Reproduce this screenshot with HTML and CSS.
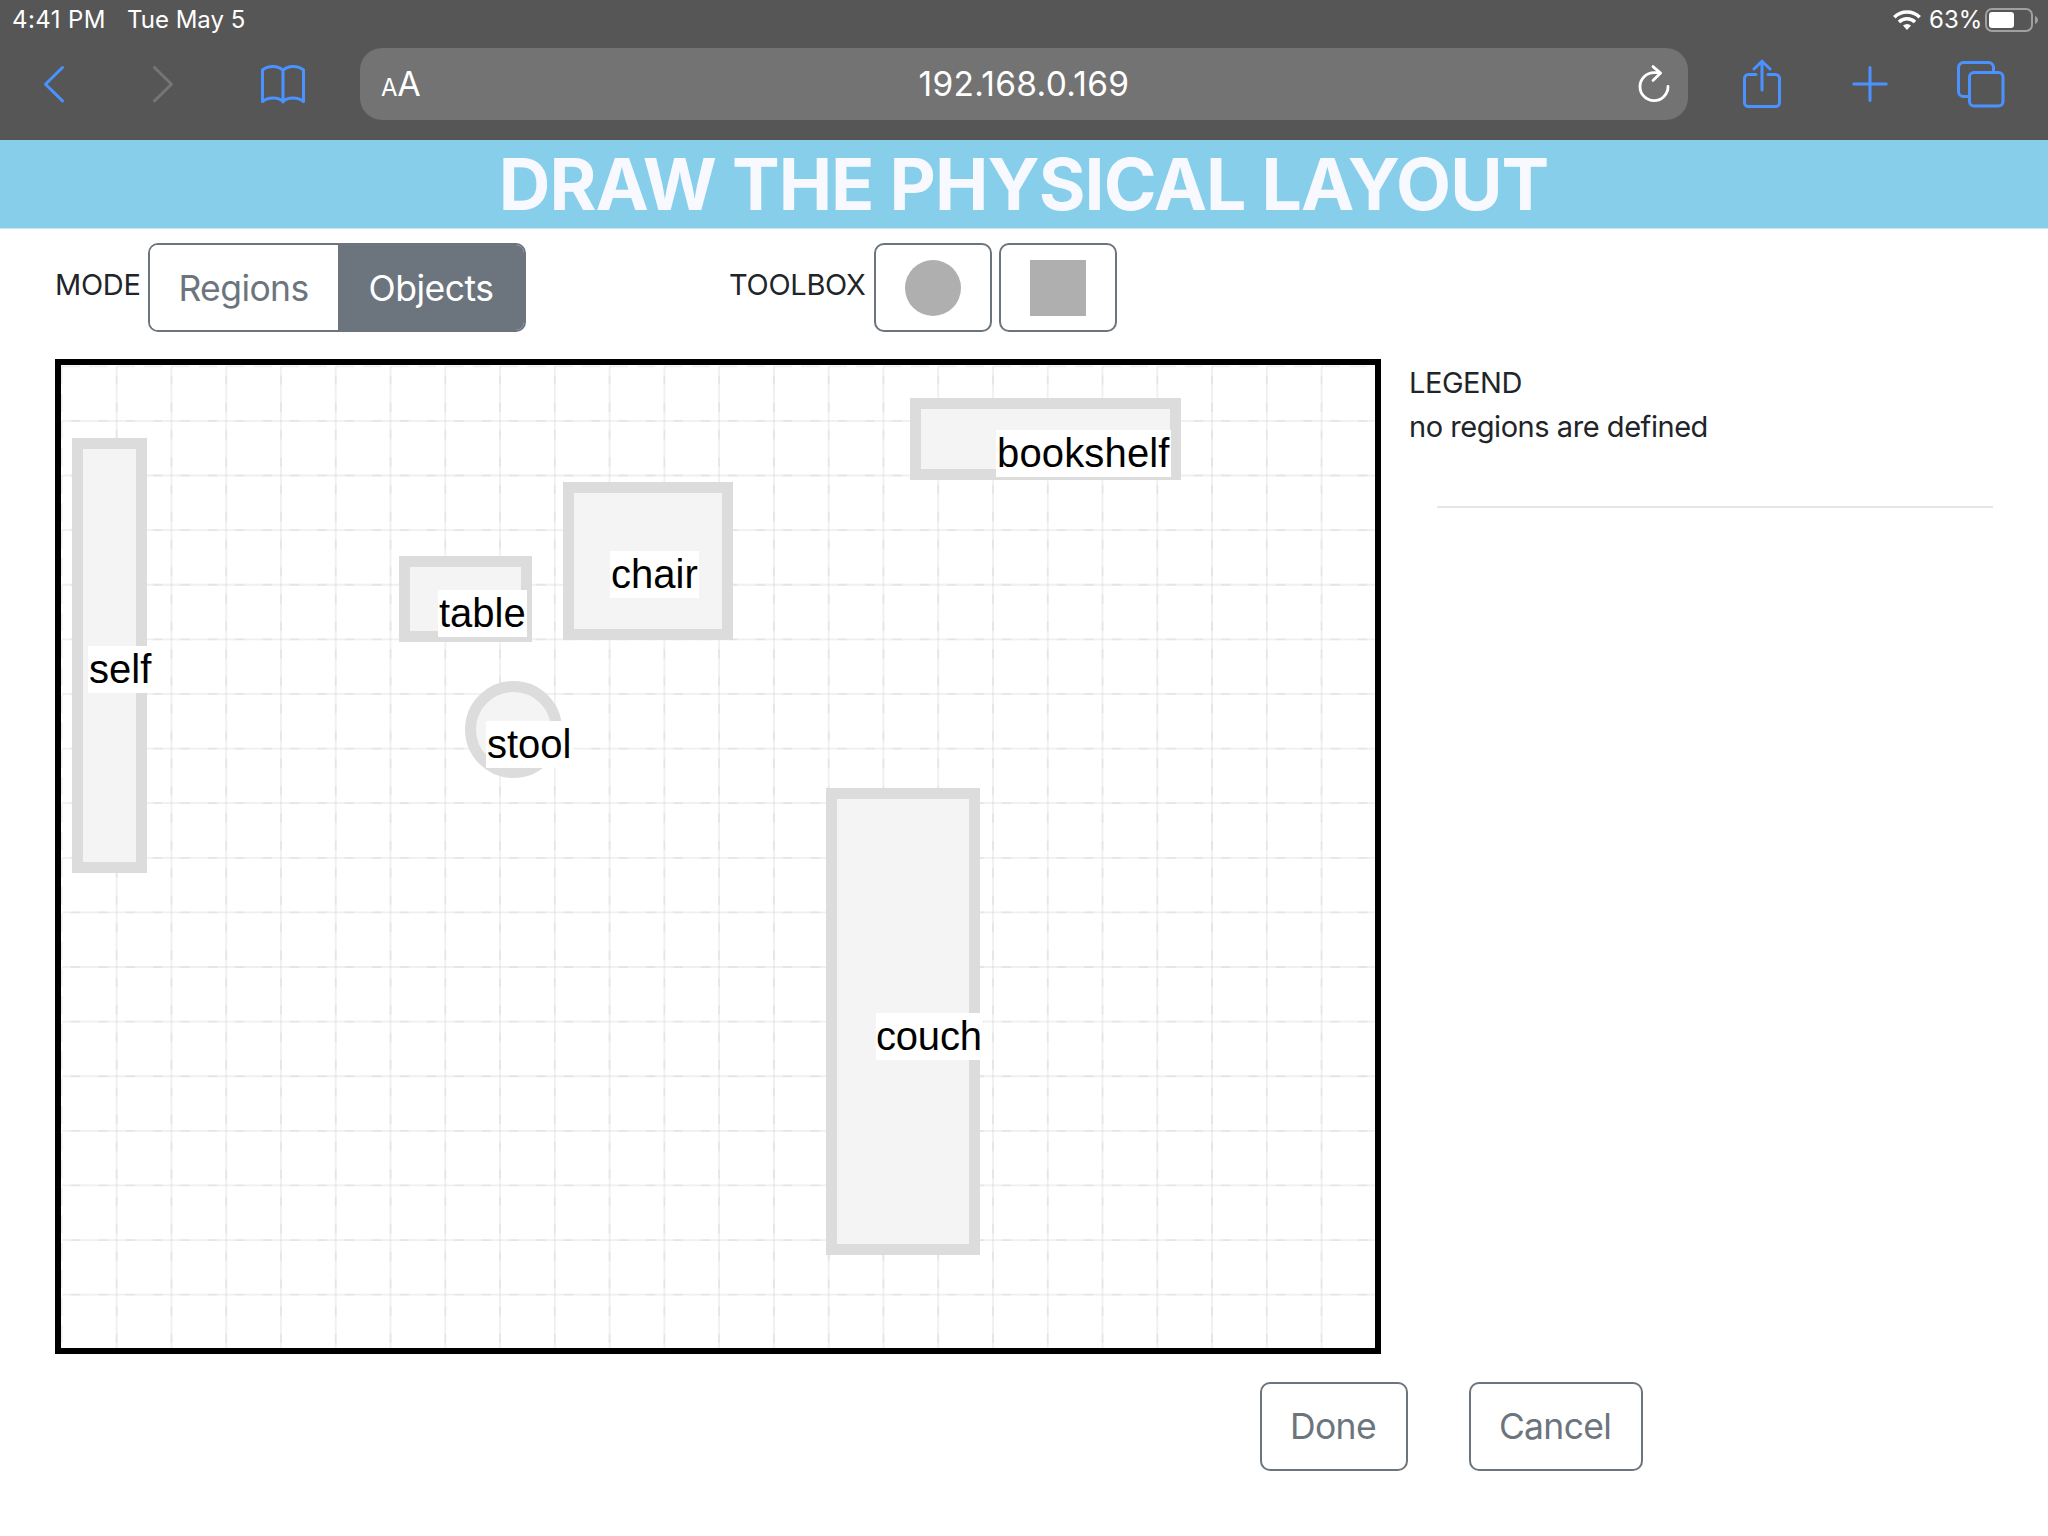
FILE: index.html
```html
<!DOCTYPE html>
<html lang="en">
<head>
<meta charset="utf-8">
<title>Draw the physical layout</title>
<link rel="stylesheet" href="styles.css">
</head>
<body>
<header class="chrome">
  <div class="status">
    <span class="clock">4:41 PM</span>
    <span class="date">Tue May 5</span>
    <svg class="wifi" width="28" height="20" viewBox="0 0 28 20" fill="none" stroke="#fff" stroke-width="3.6">
      <path d="M1.3 7.2a18.2 18.2 0 0 1 25.4 0"/>
      <path d="M6 12a11.6 11.6 0 0 1 16 0"/>
      <path d="M10 15.600a6 6 0 0 1 8 0L14 20z" fill="#fff" stroke="none"/>
    </svg>
    <span class="percent">63%</span>
    <svg class="battery" width="54" height="24" viewBox="0 0 54 24">
      <rect x="1" y="1" width="46" height="22" rx="6" fill="none" stroke="#a0a0a0" stroke-width="2"/>
      <rect x="4" y="4" width="25" height="16" rx="3" fill="#fff"/>
      <path d="M50 8c4 1.500 4 6.500 0 8z" fill="#a0a0a0"/>
    </svg>
  </div>
  <nav class="toolbar">
    <svg class="icon back" width="24" height="40" viewBox="0 0 24 40"><path d="M19.500 3.500 2.500 20.200l17 16.700"/></svg>
    <svg class="icon forward" width="24" height="40" viewBox="0 0 24 40"><path d="M3.500 3.500 20.500 20.200 3.500 36.900"/></svg>
    <svg class="icon book" width="46" height="40" viewBox="0 0 46 40"><path d="M23 38V6.500C18.500 1.200 8 1.200 2.500 6v31.500C8 32.700 18.500 32.700 23 37.500c4.500-4.800 15-4.800 20.500 0V6C38 1.200 27.500 1.200 23 6.500"/></svg>
    <div class="address">
      <span class="reader"><span class="reader-small">A</span>A</span>
      <span class="url">192.168.0.169</span>
      <svg class="reload" width="34" height="40" viewBox="0 0 34 40"><path d="M31 22.500A14 14 0 1 1 17 8.600h6M16 2.600l7.600 6.500-7.600 7.300"/></svg>
    </div>
    <svg class="icon share" width="40" height="50" viewBox="0 0 40 50"><path d="M14 15.500H6.500a4 4 0 0 0-4 4v24a4 4 0 0 0 4 4h27a4 4 0 0 0 4-4v-24a4 4 0 0 0-4-4H26M20 31V2.500M12 10l8-7.800L28 10"/></svg>
    <svg class="icon plus" width="36" height="38" viewBox="0 0 36 38"><path d="M18 2.500v33M1.800 19h32.400"/></svg>
    <svg class="icon tabs" width="50" height="50" viewBox="0 0 50 50"><rect x="13.500" y="13.500" width="33.500" height="33.500" rx="4.500"/><path d="M13 37.500H7.500a5 5 0 0 1-5-5v-24a5 5 0 0 1 5-5h25a5 5 0 0 1 5 5v5"/></svg>
  </nav>
</header>
<h1 class="banner"><span class="banner-text">DRAW THE PHYSICAL LAYOUT</span></h1>
<section class="controls">
  <span class="label mode-label">MODE</span>
  <div class="group">
    <button class="seg seg-off">Regions</button>
    <button class="seg seg-on">Objects</button>
  </div>
  <span class="label tool-label">TOOLBOX</span>
  <button class="tool"><span class="shape round"></span></button>
  <button class="tool"><span class="shape"></span></button>
</section>
<main class="work">
  <div class="canvas">
    <svg class="grid" width="1315" height="983" viewBox="0 0 1315 983">
      <g fill="none" stroke="#c4c4c4" stroke-opacity=".25" stroke-width="1.800">
        <g stroke-dasharray="18.250 9.135">
          <path d="M.9 1.300v983m54.770-983v983m54.770-983v983m54.770-983v983m54.770-983v983m54.770-983v983m54.770-983v983m54.770-983v983m54.770-983v983m54.770-983v983m54.770-983v983m54.770-983v983m54.770-983v983m54.770-983v983m54.770-983v983m54.770-983v983m54.770-983v983m54.770-983v983m54.770-983v983m54.770-983v983m54.770-983v983m54.770-983v983m54.770-983v983m54.770-983v983"/>
          <path d="M.9 1.300h1314m-1314 54.610h1314m-1314 54.610h1314m-1314 54.610h1314m-1314 54.610h1314m-1314 54.610h1314m-1314 54.610h1314m-1314 54.610h1314m-1314 54.610h1314m-1314 54.610h1314m-1314 54.610h1314m-1314 54.610h1314m-1314 54.610h1314m-1314 54.610h1314m-1314 54.610h1314m-1314 54.610h1314m-1314 54.610h1314m-1314 54.610h1314"/>
        </g>
        <g stroke-dasharray="18.250 9.135" stroke-dashoffset="18.250">
          <path d="M55.670 1.300v983m54.770-983v983m54.770-983v983m54.770-983v983m54.770-983v983m54.770-983v983m54.770-983v983m54.770-983v983m54.770-983v983m54.770-983v983m54.770-983v983m54.770-983v983m54.770-983v983m54.770-983v983m54.770-983v983m54.770-983v983m54.770-983v983m54.770-983v983m54.770-983v983m54.770-983v983m54.770-983v983m54.770-983v983m54.770-983v983"/>
          <path d="M.9 55.910h1314m-1314 54.610h1314m-1314 54.610h1314m-1314 54.610h1314m-1314 54.610h1314m-1314 54.610h1314m-1314 54.610h1314m-1314 54.610h1314m-1314 54.610h1314m-1314 54.610h1314m-1314 54.610h1314m-1314 54.610h1314m-1314 54.610h1314m-1314 54.610h1314m-1314 54.610h1314m-1314 54.610h1314m-1314 54.610h1314"/>
        </g>
      </g>
    </svg>
    <div class="item self"></div><span class="tag tag-self">self</span>
    <div class="item table"></div><span class="tag tag-table">table</span>
    <div class="item chair"></div><span class="tag tag-chair">chair</span>
    <div class="item stool"></div><span class="tag tag-stool">stool</span>
    <div class="item shelf"></div><span class="tag tag-shelf">bookshelf</span>
    <div class="item couch"></div><span class="tag tag-couch">couch</span>
  </div>
  <aside class="legend">
    <div class="legend-title">LEGEND</div>
    <div class="legend-text">no regions are defined</div>
    <hr class="rule">
  </aside>
</main>
<footer class="actions">
  <button class="action done">Done</button>
  <button class="action cancel">Cancel</button>
</footer>
</body>
</html>
```
FILE: styles.css
```css
* { box-sizing: border-box; }
body {
  margin: 0;
  width: 2048px;
  height: 1536px;
  overflow: hidden;
  background: #fff;
  color: #212529;
  font-family: Inter, "Liberation Sans", sans-serif;
  font-size: 29px;
}
button { margin: 0; padding: 0; font: inherit; background: #fff; }
svg { display: block; flex: none; }
span { white-space: nowrap; }

/* browser chrome */
.chrome { height: 140px; background: #565656; color: #fff; }
.status { display: flex; align-items: center; height: 40px; padding: 0 9px 0 12px; font-size: 24px; line-height: 40px; }
.clock { width: 115px; letter-spacing: .4px; }
.wifi { margin-left: auto; }
.percent { width: 56px; margin-left: 8px; }
.toolbar { display: flex; align-items: center; height: 88px; padding-left: 43px; }
.icon { fill: none; stroke: #4a92ff; stroke-width: 3; stroke-linecap: round; stroke-linejoin: round; }
.forward { margin-left: 84px; stroke: #757575; }
.book { margin-left: 85px; }
.address { display: flex; align-items: center; width: 1328px; height: 72px; margin-left: 54px; padding: 0 17px 0 21px; border-radius: 22px; background: #737373; }
.reader { width: 160px; padding-top: 4px; font-size: 34px; line-height: 40px; letter-spacing: -.4px; }
.reader-small { font-size: 24px; }
.url { flex: 1; margin-right: 130px; text-align: center; font-size: 33.5px; letter-spacing: .3px; }
.reload { fill: none; stroke: #fff; stroke-width: 2.8; stroke-linecap: round; stroke-linejoin: round; }
.share { margin-left: 54px; }
.plus { margin-left: 69.5px; }
.tabs { margin-left: 68.5px; }

/* page banner */
.banner { margin: 0; height: 89px; background: #87ceeb; border-bottom: 1px solid #c3e6f5; color: #f8f8ff; text-align: center; font-size: 71.5px; font-weight: 700; letter-spacing: -.96px; line-height: 88px; }
.banner-text { margin-right: 1px; }

/* mode switch and toolbox */
.controls { display: flex; height: 131px; padding: 14px 0 0 55px; }
.label { line-height: 83px; letter-spacing: -.3px; }
.mode-label { width: 93px; }
.group { display: flex; width: 378px; height: 89px; border: 2px solid #6c757d; border-radius: 10px; overflow: hidden; }
.seg { border: 0; padding-top: 2px; font-size: 35.5px; letter-spacing: -.6px; color: #6c757d; }
.seg-off { width: 188px; padding-right: 1px; }
.seg-on { flex: 1; background: #6c757d; color: #fff; letter-spacing: -.5px; }
.tool-label { width: 145px; margin-left: 203px; }
.tool { display: flex; align-items: center; justify-content: center; width: 118px; height: 89px; margin-right: 7px; border: 2px solid #6c757d; border-radius: 10px; }
.shape { width: 56px; height: 56px; background: #afafaf; }
.round { border-radius: 50%; }

/* drawing area: items sit at free positions */
.work { display: flex; height: 1022px; }
.canvas { position: relative; flex: none; width: 1326px; height: 995px; margin-left: 55px; margin-top: -1px; border: 6px solid #000; overflow: hidden; }
.item { position: absolute; border: 11px solid #dcdcdc; background: #f4f4f4; }
.self { left: 11px; top: 73px; width: 75px; height: 435px; }
.table { left: 338px; top: 191px; width: 133px; height: 86px; }
.chair { left: 502px; top: 117px; width: 170px; height: 158px; }
.stool { left: 404px; top: 316px; width: 97px; height: 97px; border-radius: 50%; }
.shelf { left: 849px; top: 33px; width: 271px; height: 82px; }
.couch { left: 765px; top: 423px; width: 154px; height: 467px; }
.tag { position: absolute; height: 47px; padding: 0 1px; background: #fff; color: #000; font: 40px/47px "Liberation Sans", Arial, sans-serif; }
.tag-self { left: 27px; top: 281px; }
.tag-table { left: 377px; top: 225px; line-height: 46px; }
.tag-chair { left: 549px; top: 186px; }
.tag-stool { left: 425px; top: 356px; line-height: 46px; }
.tag-shelf { left: 935px; top: 65px; line-height: 46px; letter-spacing: .15px; }
.tag-couch { left: 815px; top: 648px; padding-left: 0; letter-spacing: -.2px; }

.legend { margin-left: 28px; padding-top: 1px; line-height: 44px; letter-spacing: -.45px; }
.rule { width: 556px; height: 2px; margin: 57px 0 0 28px; border: 0; background: #e6e6e6; }

.actions { display: flex; padding-left: 1260px; gap: 61px; }
.action { height: 89px; padding-right: 2px; border: 2px solid #6c757d; border-radius: 10px; color: #6c757d; font-size: 35.5px; letter-spacing: -.7px; }
.done { width: 148px; }
.cancel { width: 174px; }
```
